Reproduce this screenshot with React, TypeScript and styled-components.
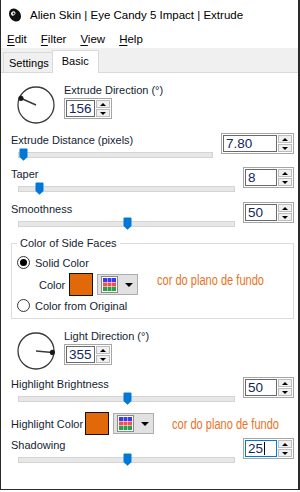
import React from 'react';
import styled, { createGlobalStyle } from 'styled-components';

const GlobalStyle = createGlobalStyle`
  html, body { margin: 0; padding: 0; background: #fff; }
  body {
    font-family: "Liberation Sans", Arial, sans-serif;
    font-size: 11px;
    color: #000;
  }
  * { box-sizing: border-box; }
`;

const Window = styled.div`
  width: 300px;
  height: 490px;
  display: flex;
  flex-direction: column;
  background: #fff;
  border-left: 1px solid #2b2b2b;
  border-right: 2px solid #2b2b2b;
  border-bottom: 1px solid #2b2b2b;
`;

const TitleBar = styled.div`
  height: 30px;
  display: flex;
  align-items: center;
  gap: 8px;
  padding-left: 7px;
  font-size: 11.5px;
  color: #000;
`;

const MenuBar = styled.div`
  height: 18px;
  display: flex;
  align-items: center;
  gap: 14px;
  padding-left: 6px;
  font-size: 11.5px;
`;

const MenuItem = styled.span`
  & u { text-decoration: underline; text-underline-offset: 2px; }
`;

const TabStrip = styled.div`
  height: 25px;
  display: flex;
  align-items: flex-end;
  padding-left: 2px;
  background: #f0f0f0;
  border-bottom: 1px solid #d9d9d9;
`;

const Tab = styled.div<{ $active?: boolean }>`
  height: ${p => (p.$active ? 23 : 20)}px;
  margin-bottom: ${p => (p.$active ? -1 : 0)}px;
  margin-left: ${p => (p.$active ? -1 : 0)}px;
  padding: ${p => (p.$active ? '0 9px 2px 9px' : '0 3px 0 5px')};
  display: flex;
  align-items: center;
  background: ${p => (p.$active ? '#fff' : '#f0f0f0')};
  border: 1px solid #d9d9d9;
  border-bottom: none;
  font-size: 11px;
`;

const Body = styled.div`
  flex: 1;
  display: flex;
  flex-direction: column;
  padding: 0 4px 0 10px;
  color: #141e32;
`;

const DialRow = styled.div<{ $top: number }>`
  display: flex;
  margin-top: ${p => p.$top}px;
`;

const DialBox = styled.div`
  width: 38px;
  height: 38px;
  margin: 3px 9px 0 6px;
`;

const DialSide = styled.div`
  display: flex;
  flex-direction: column;
`;

const Label = styled.div`
  height: 15px;
  line-height: 15px;
  white-space: nowrap;
`;

const Section = styled.div<{ $top: number }>`
  display: grid;
  grid-template-columns: 1fr auto;
  grid-template-rows: 15px 14px;
  column-gap: 8px;
  margin-top: ${p => p.$top}px;
`;

const SpinCell = styled.div`
  grid-column: 2;
  grid-row: 1 / span 2;
  align-self: start;
`;

const Slider = styled.div`
  height: 14px;
  padding-left: 7px;
`;

const Track = styled.div`
  position: relative;
  height: 14px;
  &::before {
    content: '';
    position: absolute;
    left: 0;
    right: 0;
    top: 4px;
    height: 4px;
    background: #e7e7e7;
    border: 1px solid #d4d4d4;
  }
`;

const Thumb = styled.svg<{ $pos: number }>`
  position: absolute;
  top: 0;
  left: calc(${p => p.$pos * 100}% - 4px);
  width: 9px;
  height: 13px;
`;

const Spin = styled.div<{ $w: number }>`
  width: ${p => p.$w}px;
  height: 21px;
  display: flex;
  padding: 1px;
  border: 1px solid #a6a6a6;
  background: #fff;
  flex-shrink: 0;
`;

const SpinField = styled.div<{ $focus?: boolean }>`
  flex: 1;
  display: flex;
  align-items: center;
  padding-left: 2px;
  border: 1px solid ${p => (p.$focus ? '#0078d7' : '#6a6a6a')};
  font-size: 13.5px;
  color: #11275a;
`;

const Caret = styled.span`
  width: 1px;
  height: 13px;
  background: #000;
  margin-left: 1px;
`;

const SpinButtons = styled.div`
  width: 14px;
  margin-left: 1px;
  display: flex;
  flex-direction: column;
  gap: 1px;
`;

const SpinBtn = styled.div<{ $down?: boolean }>`
  flex: 1;
  display: flex;
  align-items: center;
  justify-content: center;
  background: #f0f0f0;
  border: 1px solid #bcbcbc;
  &::after {
    content: '';
    border-left: 3px solid transparent;
    border-right: 3px solid transparent;
    ${p => (p.$down ? 'border-top: 3px solid #000;' : 'border-bottom: 3px solid #000;')}
  }
`;

const Group = styled.fieldset`
  margin: 5px 0 0 0;
  padding: 0 0 5px 5px;
  border: 1px solid #dcdcdc;
  min-width: 0;
`;

const Legend = styled.legend`
  padding: 0 3px;
  line-height: 15px;
`;

const RadioRow = styled.label<{ $top: number }>`
  display: flex;
  align-items: center;
  gap: 5px;
  height: 15px;
  margin-top: ${p => p.$top}px;
`;

const Radio = styled.span<{ $checked?: boolean }>`
  width: 13px;
  height: 13px;
  border-radius: 50%;
  border: 1px solid #333;
  background: #fff;
  display: flex;
  align-items: center;
  justify-content: center;
  &::after {
    content: '';
    width: 7px;
    height: 7px;
    border-radius: 50%;
    background: ${p => (p.$checked ? '#000' : 'transparent')};
  }
`;

const ColorRow = styled.div<{ $top: number; $indent: number }>`
  display: flex;
  align-items: center;
  height: 23px;
  margin-top: ${p => p.$top}px;
  padding-left: ${p => p.$indent}px;
`;

const RowLabel = styled.span<{ $w: number }>`
  width: ${p => p.$w}px;
  flex-shrink: 0;
  white-space: nowrap;
`;

const Swatch = styled.div`
  width: 24px;
  height: 23px;
  flex-shrink: 0;
  border: 1px solid #111;
  background: #e2690a;
`;

const PickerButton = styled.div`
  width: 41px;
  height: 21px;
  flex-shrink: 0;
  margin-left: 4px;
  display: flex;
  align-items: center;
  gap: 7px;
  padding-left: 3px;
  background: #e1e1e1;
  border: 1px solid #adadad;
  &::after {
    content: '';
    border-left: 4px solid transparent;
    border-right: 4px solid transparent;
    border-top: 4px solid #000;
  }
`;

const Note = styled.span<{ $left: number; $shift: number }>`
  display: inline-block;
  margin-left: ${p => p.$left}px;
  margin-top: ${p => p.$shift}px;
  font-family: "Liberation Sans", sans-serif;
  font-size: 14px;
  color: #e8731e;
  white-space: nowrap;
  transform: scaleX(0.79);
  transform-origin: left center;
`;

const AppIcon = () => (
  <svg width="14" height="16" viewBox="0 0 14 16">
    <ellipse cx="7" cy="8" rx="5.5" ry="7" transform="rotate(-35 7 8)" fill="#111" />
    <ellipse cx="5.2" cy="6.4" rx="2.4" ry="2" fill="#fff" transform="rotate(-35 5.2 6.4)" />
    <circle cx="5.6" cy="6.6" r="1" fill="#111" />
  </svg>
);

const Dial = ({ angle }: { angle: number }) => {
  const r = (angle * Math.PI) / 180;
  const x = 19 + 16.5 * Math.cos(r);
  const y = 19 - 16.5 * Math.sin(r);
  return (
    <DialBox>
      <svg width="38" height="38" viewBox="0 0 38 38">
        <circle cx="19" cy="19" r="18" fill="none" stroke="#3a3a3a" strokeWidth="1.3" />
        <line x1="19" y1="19" x2={x} y2={y} stroke="#3a3a3a" strokeWidth="1.5" />
        <circle cx={x} cy={y} r="2.6" fill="#1a1a1a" />
      </svg>
    </DialBox>
  );
};

const SpinBox = ({ value, width, focus }: { value: string; width: number; focus?: boolean }) => (
  <Spin $w={width}>
    <SpinField $focus={focus}>
      {value}
      {focus && <Caret />}
    </SpinField>
    <SpinButtons>
      <SpinBtn />
      <SpinBtn $down />
    </SpinButtons>
  </Spin>
);

const SliderField = ({
  label, value, pos, width = 51, top, focus,
}: { label: string; value: string; pos: number; width?: number; top: number; focus?: boolean }) => (
  <Section $top={top}>
    <Label>{label}</Label>
    <Slider>
      <Track>
        <Thumb $pos={pos} viewBox="0 0 9 13">
          <path d="M0.5 1.5 Q0.5 0.5 1.5 0.5 H7.5 Q8.5 0.5 8.5 1.5 V9 L4.5 12.8 L0.5 9 Z" fill="#0078d7" />
        </Thumb>
      </Track>
    </Slider>
    <SpinCell>
      <SpinBox value={value} width={width} focus={focus} />
    </SpinCell>
  </Section>
);

const GridIcon = () => (
  <svg width="17" height="17" viewBox="0 0 17 17">
    <rect x="0.5" y="0.5" width="16" height="16" fill="#fff" stroke="#8a8a8a" />
    {[0, 1, 2].map(r =>
      [0, 1, 2].map(c => (
        <rect
          key={`${r}-${c}`}
          x={2 + c * 4.5}
          y={2 + r * 4.5}
          width="4"
          height="4"
          fill={['#3a3af5', '#f25050', '#23a34a'][r]}
        />
      ))
    )}
  </svg>
);

const ColorPicker = () => (
  <PickerButton>
    <GridIcon />
  </PickerButton>
);

export default function App() {
  return (
    <>
      <GlobalStyle />
      <Window>
        <TitleBar>
          <AppIcon />
          <span>Alien Skin | Eye Candy 5 Impact | Extrude</span>
        </TitleBar>
        <MenuBar>
          <MenuItem><u>E</u>dit</MenuItem>
          <MenuItem><u>F</u>ilter</MenuItem>
          <MenuItem><u>V</u>iew</MenuItem>
          <MenuItem><u>H</u>elp</MenuItem>
        </MenuBar>
        <TabStrip>
          <Tab>Settings</Tab>
          <Tab $active>Basic</Tab>
        </TabStrip>
        <Body>
          <DialRow $top={10}>
            <Dial angle={156} />
            <DialSide>
              <Label>Extrude Direction (°)</Label>
              <SpinBox value="156" width={48} />
            </DialSide>
          </DialRow>
          <SliderField label="Extrude Distance (pixels)" value="7.80" pos={0.025} width={73} top={9} />
          <SliderField label="Taper" value="8" pos={0.096} top={5} />
          <SliderField label="Smoothness" value="50" pos={0.5} top={6} />
          <Group>
            <Legend>Color of Side Faces</Legend>
            <RadioRow $top={4}>
              <Radio $checked />
              Solid Color
            </RadioRow>
            <ColorRow $top={3} $indent={22}>
              <RowLabel $w={30}>Color</RowLabel>
              <Swatch />
              <ColorPicker />
              <Note $left={19} $shift={-10}>cor do plano de fundo</Note>
            </ColorRow>
            <RadioRow $top={2}>
              <Radio />
              Color from Original
            </RadioRow>
          </Group>
          <DialRow $top={10}>
            <Dial angle={355} />
            <DialSide>
              <Label>Light Direction (°)</Label>
              <SpinBox value="355" width={48} />
            </DialSide>
          </DialRow>
          <SliderField label="Highlight Brightness" value="50" pos={0.5} top={7} />
          <ColorRow $top={6} $indent={0}>
            <RowLabel $w={74}>Highlight Color</RowLabel>
            <Swatch />
            <ColorPicker />
            <Note $left={18} $shift={0}>cor do plano de fundo</Note>
          </ColorRow>
          <SliderField label="Shadowing" value="25" pos={0.502} top={3} focus />
        </Body>
      </Window>
    </>
  );
}
